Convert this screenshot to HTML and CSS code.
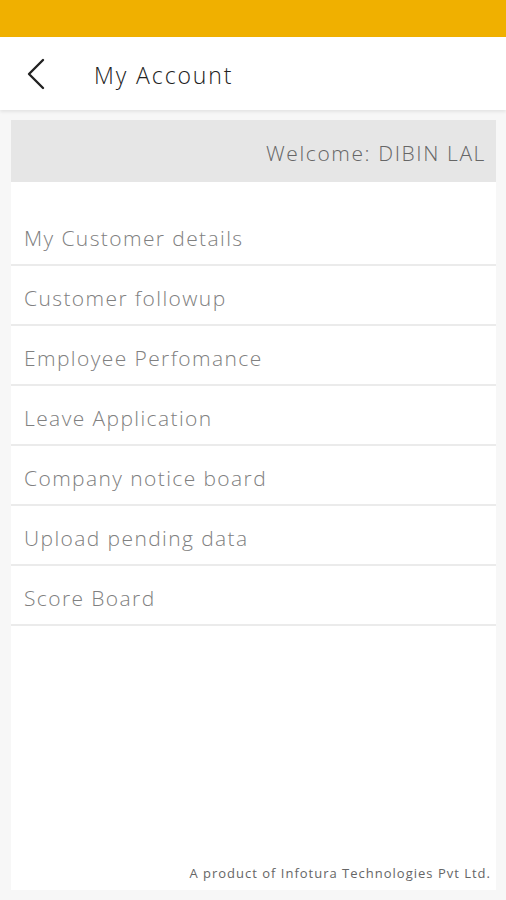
FILE: index.html
```html
<!DOCTYPE html>
<html lang="en">
<head>
    <meta charset="UTF-8">
    <meta name="viewport" content="width=device-width, initial-scale=1.0">
    <title>My Account</title>
    <link rel="stylesheet" href="styles.css">
</head>
<body>
<div class="status"></div>
<header class="topbar">
    <a class="back">
        <svg width="20" height="32" viewBox="0 0 20 32"><path d="M17 2 L3 16 L17 30" fill="none" stroke="#222" stroke-width="2.4" stroke-linecap="round" stroke-linejoin="round"/></svg>
    </a>
    <h1 class="title">My Account</h1>
</header>
<div class="page">
    <div class="card">
        <div class="welcome">Welcome: DIBIN LAL</div>
        <ul class="menu">
            <li>My Customer details</li>
            <li>Customer followup</li>
            <li>Employee Perfomance</li>
            <li>Leave Application</li>
            <li>Company notice board</li>
            <li>Upload pending data</li>
            <li>Score Board</li>
        </ul>
        <p class="footer">A product of Infotura Technologies Pvt Ltd.</p>
    </div>
</div>
</body>
</html>
```

FILE: styles.css
```css
html, body {
    margin: 0;
    height: 100%;
}
body {
    display: flex;
    flex-direction: column;
    background: #f7f7f7;
    font-family: "Open Sans", "Noto Sans", sans-serif;
}
.status {
    height: 37px;
    background: #f0b000;
}
.topbar {
    position: relative;
    z-index: 1;
    display: flex;
    align-items: center;
    height: 73px;
    background: #fff;
    box-shadow: 0 2px 3px rgba(0, 0, 0, .08);
}
.back {
    display: flex;
    width: 20px;
    margin-left: 26px;
}
.title {
    margin: 2px 0 0 48px;
    font-size: 23px;
    font-weight: 300;
    letter-spacing: 1.9px;
    color: #222;
}
.page {
    flex: 1;
    display: flex;
    padding: 10px 10px 10px 11px;
}
.card {
    flex: 1;
    display: flex;
    flex-direction: column;
    background: #fff;
}
.welcome {
    height: 62px;
    line-height: 66px;
    padding-right: 10px;
    text-align: right;
    background: #e6e6e6;
    color: #666;
    font-size: 21px;
    font-weight: 300;
    letter-spacing: 1.6px;
}
.menu {
    margin: 24px 0 0;
    padding: 0;
    list-style: none;
}
.menu li {
    height: 58px;
    line-height: 64px;
    padding-left: 13px;
    border-bottom: 2px solid #ebebeb;
    color: #808080;
    font-size: 21px;
    font-weight: 300;
    letter-spacing: 1.4px;
}
.footer {
    margin: auto 5px 8px 0;
    text-align: right;
    font-size: 13px;
    letter-spacing: 1px;
    color: #666;
}
```
